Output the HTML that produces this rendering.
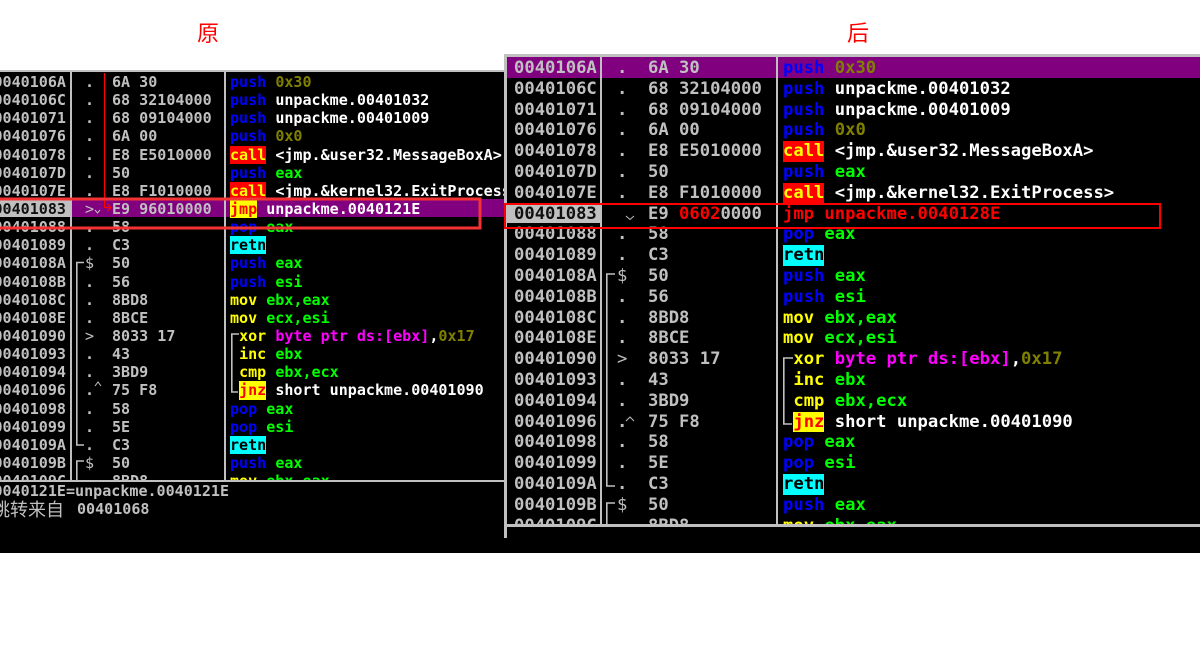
<!DOCTYPE html>
<html lang="zh"><head><meta charset="utf-8"><title>原 后</title>
<style>
html,body{margin:0;padding:0;background:#fff;width:1200px;height:655px;overflow:hidden}
#s{position:absolute;left:0;top:0;width:1200px;height:655px;overflow:hidden;background:#fff}
.a{position:absolute}
.t{position:absolute;color:#f00;font:22px/26px "Liberation Sans","Noto Sans CJK SC",sans-serif;top:21px}
pre{position:absolute;margin:0;color:#c0c0c0;font-family:"DejaVu Sans Mono","Liberation Mono","Noto Sans CJK SC",monospace;font-weight:bold;white-space:pre}
.L pre{font-size:15.05px;line-height:18.14px;top:1px}
.R pre{font-size:17.2px;line-height:20.8px;top:1px}
.b{color:#00f}.w{color:#fff}.g{color:#0f0}.o{color:#808000}.m{color:#f0f}.y{color:#ff0}.r{color:#f00}.k{color:#101010}
.u{font-weight:normal}
.c,.j,.n{display:inline-block;vertical-align:top}
.c{background:#f00;color:#ff0}.j{background:#ff0;color:#f00}.n{background:#0ff;color:#000}
.L,.R{position:absolute;overflow:hidden;background:#000}
svg{position:absolute;left:0;top:0}
</style></head><body><div id="s">
<div class="t" style="left:197px">原</div>
<div class="t" style="left:847px">后</div>

<div class="a" style="left:0;top:70px;width:504px;height:483px;background:#000"></div>
<div class="a" style="left:504px;top:54px;width:696px;height:499px;background:#000"></div>
<div class="a" style="left:0;top:70px;width:504px;height:3px;background:#c0c0c0"></div>
<div class="a" style="left:504px;top:54px;width:696px;height:3px;background:#c0c0c0"></div>

<!-- LEFT PANE -->
<div class="L" style="left:0;top:72px;width:504px;height:408px">
<div class="a" style="left:0;top:127px;width:70px;height:18px;background:#c0c0c0"></div>
<div class="a" style="left:71px;top:127px;width:433px;height:18px;background:#800080"></div>
<div class="a" style="left:70px;top:0;width:2px;height:408px;background:#c0c0c0"></div>
<div class="a" style="left:224px;top:0;width:2px;height:408px;background:#c0c0c0"></div>
<pre style="left:-6.5px">0040106A
0040106C
00401071
00401076
00401078
0040107D
0040107E
<span class="k">00401083</span>
00401088
00401089
0040108A
0040108B
0040108C
0040108E
00401090
00401093
00401094
00401096
00401098
00401099
0040109A
0040109B
0040109C</pre>
<pre style="left:85px">.
.
.
.
.
.
.
<span class="u">&gt;</span>
.
.
<span class="u">$</span>
.
.
.
<span class="u">&gt;</span>
.
.
.
.
.
.
<span class="u">$</span></pre>
<pre style="left:112px">6A 30
68 32104000
68 09104000
6A 00
E8 E5010000
50
E8 F1010000
E9 96010000
58
C3
50
56
8BD8
8BCE
8033 17
43
3BD9
75 F8
58
5E
C3
50
8BD8</pre>
<pre style="left:230px"><span class="b">push</span> <span class="o">0x30</span>
<span class="b">push</span> <span class="w">unpackme.00401032</span>
<span class="b">push</span> <span class="w">unpackme.00401009</span>
<span class="b">push</span> <span class="o">0x0</span>
<span class="c">call</span> <span class="w">&lt;jmp.&amp;user32.MessageBoxA&gt;</span>
<span class="b">push</span> <span class="g">eax</span>
<span class="c">call</span> <span class="w">&lt;jmp.&amp;kernel32.ExitProcess&gt;</span>
<span class="j">jmp</span> <span class="w">unpackme.0040121E</span>
<span class="b">pop</span> <span class="g">eax</span>
<span class="n">retn</span>
<span class="b">push</span> <span class="g">eax</span>
<span class="b">push</span> <span class="g">esi</span>
<span class="y">mov</span> <span class="g">ebx,eax</span>
<span class="y">mov</span> <span class="g">ecx,esi</span>
 <span class="y">xor</span> <span class="m">byte ptr ds:[ebx]</span><span class="w">,</span><span class="o">0x17</span>
 <span class="y">inc</span> <span class="g">ebx</span>
 <span class="y">cmp</span> <span class="g">ebx,ecx</span>
 <span class="j">jnz</span> <span class="w">short unpackme.00401090</span>
<span class="b">pop</span> <span class="g">eax</span>
<span class="b">pop</span> <span class="g">esi</span>
<span class="n">retn</span>
<span class="b">push</span> <span class="g">eax</span>
<span class="y">mov</span> <span class="g">ebx,eax</span></pre>
</div>
<div class="a" style="left:0;top:480px;width:504px;height:2px;background:#c0c0c0"></div>
<pre style="left:-6.5px;top:482px;font-size:15.05px;line-height:18px">0040121E=unpackme.0040121E</pre>
<pre style="left:-8px;top:498px;font-size:18px;line-height:22px;font-weight:normal;font-family:'Noto Sans CJK SC',sans-serif">跳转来自</pre>
<pre style="left:77px;top:500px;font-size:15.05px;line-height:18px">00401068</pre>

<!-- RIGHT PANE -->
<div class="R" style="left:507px;top:57px;width:693px;height:467px">
<div class="a" style="left:0;top:0;width:693px;height:21px;background:#800080"></div>
<div class="a" style="left:0;top:148px;width:93px;height:18px;background:#c0c0c0"></div>
<div class="a" style="left:93px;top:0;width:2px;height:467px;background:#c0c0c0"></div>
<div class="a" style="left:269px;top:0;width:2px;height:467px;background:#c0c0c0"></div>
<pre style="left:7px">0040106A
0040106C
00401071
00401076
00401078
0040107D
0040107E
<span class="k">00401083</span>
00401088
00401089
0040108A
0040108B
0040108C
0040108E
00401090
00401093
00401094
00401096
00401098
00401099
0040109A
0040109B
0040109C</pre>
<pre style="left:110px">.
.
.
.
.
.
.

.
.
<span class="u">$</span>
.
.
.
<span class="u">&gt;</span>
.
.
.
.
.
.
<span class="u">$</span></pre>
<pre style="left:141px">6A 30
68 32104000
68 09104000
6A 00
E8 E5010000
50
E8 F1010000
E9 <span class="r">0602</span>0000
58
C3
50
56
8BD8
8BCE
8033 17
43
3BD9
75 F8
58
5E
C3
50
8BD8</pre>
<pre style="left:276px"><span class="b">push</span> <span class="o">0x30</span>
<span class="b">push</span> <span class="w">unpackme.00401032</span>
<span class="b">push</span> <span class="w">unpackme.00401009</span>
<span class="b">push</span> <span class="o">0x0</span>
<span class="c">call</span> <span class="w">&lt;jmp.&amp;user32.MessageBoxA&gt;</span>
<span class="b">push</span> <span class="g">eax</span>
<span class="c">call</span> <span class="w">&lt;jmp.&amp;kernel32.ExitProcess&gt;</span>
<span class="r">jmp unpackme.0040128E</span>
<span class="b">pop</span> <span class="g">eax</span>
<span class="n">retn</span>
<span class="b">push</span> <span class="g">eax</span>
<span class="b">push</span> <span class="g">esi</span>
<span class="y">mov</span> <span class="g">ebx,eax</span>
<span class="y">mov</span> <span class="g">ecx,esi</span>
 <span class="y">xor</span> <span class="m">byte ptr ds:[ebx]</span><span class="w">,</span><span class="o">0x17</span>
 <span class="y">inc</span> <span class="g">ebx</span>
 <span class="y">cmp</span> <span class="g">ebx,ecx</span>
 <span class="j">jnz</span> <span class="w">short unpackme.00401090</span>
<span class="b">pop</span> <span class="g">eax</span>
<span class="b">pop</span> <span class="g">esi</span>
<span class="n">retn</span>
<span class="b">push</span> <span class="g">eax</span>
<span class="y">mov</span> <span class="g">ebx,eax</span></pre>
</div>
<div class="a" style="left:504px;top:54px;width:3px;height:484px;background:#c0c0c0"></div>
<div class="a" style="left:507px;top:524px;width:693px;height:3px;background:#c0c0c0"></div>

<svg width="1200" height="655" viewBox="0 0 1200 655" fill="none">
<g stroke="#c0c0c0" stroke-width="1.6">
<path d="M84 262.5H76.8V445H84"/>
<path d="M84 461H76.8V480"/>
<path d="M239 334H231.8V392H238"/>
<path d="M793 358H783.8V424H792"/>
<path d="M615 274H606.8V486H615"/>
<path d="M615 503H606.8V524"/>
</g>
<g stroke="#c0c0c0" stroke-width="1">
<path d="M95 386L98 382L101 386"/>
<path d="M95 210L97.5 213L100 210"/>
<path d="M626 421L630 417L634 421"/>
<path d="M626 216L630 219.5L634 216"/>
</g>
<path d="M104.5 73V207.5H111M107.5 204L111 207.5L107.5 211" stroke="#f00" stroke-width="1.2"/>
<rect x="-5" y="199" width="485" height="29" stroke="#f33333" stroke-width="3"/>
<rect x="505" y="204" width="655" height="24" stroke="#f00" stroke-width="2"/>
</svg>
</div></body></html>
